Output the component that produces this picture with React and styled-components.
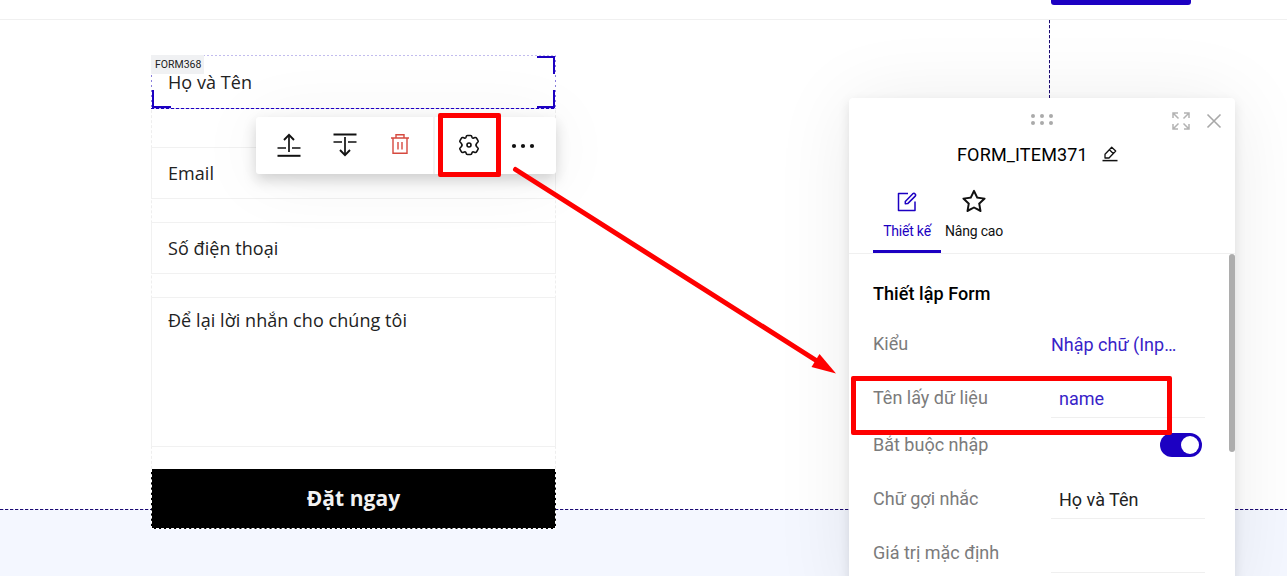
import React from "react";
import styled, { createGlobalStyle, css } from "styled-components";
import { AiOutlineStar } from "react-icons/ai";

const BLUE = "#1c00c2";

const GlobalStyle = createGlobalStyle`
  * { box-sizing: border-box; }
  html, body { margin: 0; height: 576px; overflow: hidden; background: #fff; }
  svg { display: block; flex: none; }
`;

const Page = styled.div`
  position: relative;
  width: 1287px;
  height: 576px;
  overflow: hidden;
  display: flex;
  flex-direction: column;
  background: #f4f7ff;
  font-family: Roboto, sans-serif;
  color: #111;
`;

const Header = styled.header`
  height: 20px;
  flex: none;
  background: #fff;
  border-bottom: 1px solid #f0f0f0;
  padding-left: 1051px;
`;

const HeaderButton = styled.div`
  width: 140px;
  height: 5px;
  background: ${BLUE};
  border-radius: 0 0 3px 3px;
`;

const Section = styled.section`
  height: 490px;
  flex: none;
  display: flex;
  background:
    repeating-linear-gradient(90deg, #1b0b70 0 3px, #b9b3e6 3px 4px, #fff 4px 5px) 0 489px / 100% 1px no-repeat,
    repeating-linear-gradient(180deg, #1b0b70 0 3px, #b9b3e6 3px 4px, #fff 4px 5px) 1049px 0 / 1px 100% no-repeat,
    #fff;
  padding: 35px 0 0 151px;
`;

const Form = styled.div`
  width: 405px;
  height: 474px;
  display: flex;
  flex-direction: column;
  border: 1px dashed #eeeeee;
  border-width: 0 1px;
  font-family: "Open Sans", sans-serif;
  font-size: 18px;
  line-height: 26px;
  font-weight: 370;
  letter-spacing: 0.06px;
  color: #222;
`;

const Field = styled.div`
  flex: none;
  height: ${(p) => p.$h}px;
  margin: 0 -1px ${(p) => p.$gap}px;
  padding: ${(p) => p.$top}px 17px 0 16px;
  border: 1px solid #f1f1f1;
`;

const SelectedField = styled.div`
  position: relative;
  flex: none;
  height: 54px;
  margin: 0 -1px 38px;
  padding: 14px 17px;
  background:
    repeating-linear-gradient(90deg, ${BLUE} 0 3px, #c9c2f2 3px 5px) 0 53px / 100% 1px no-repeat,
    repeating-linear-gradient(90deg, #c2bcee 0 2px, #fff 2px 4px) 0 0 / 100% 1px no-repeat,
    repeating-linear-gradient(180deg, #8b80dc 0 2px, #fff 2px 5px) 0 0 / 1px 100% no-repeat,
    repeating-linear-gradient(180deg, #8b80dc 0 2px, #fff 2px 5px) 404px 0 / 1px 100% no-repeat;
`;

const FormBadge = styled.span`
  position: absolute;
  left: 0;
  top: 0;
  width: 53px;
  height: 19px;
  padding-left: 4px;
  background: #f0f1f3;
  font: 400 10.5px/19px Roboto, sans-serif;
  letter-spacing: 0;
  color: #222;
`;

const Corner = styled.i`
  position: absolute;
  width: 18px;
  height: 18px;
  border: 0 solid ${BLUE};
  ${(p) => p.$side === "bl" && css`left: 1px; bottom: 1px; width: 19px; border-width: 0 0 2px 2px;`}
  ${(p) => p.$side === "br" && css`right: 1px; bottom: 1px; border-width: 0 2px 2px 0;`}
  ${(p) => p.$side === "tr" && css`right: 1px; top: 1px; border-width: 2px 2px 0 0;`}
`;

const Submit = styled.div`
  flex: none;
  height: 60px;
  margin: 0 -1px;
  padding-bottom: 1px;
  display: flex;
  align-items: center;
  justify-content: center;
  background: #000;
  border: 1px dashed #fff;
  border-top: 0;
  font-size: 21px;
  font-weight: 700;
  color: #f2f2f2;
`;

const Toolbar = styled.div`
  position: absolute;
  left: 256px;
  top: 117px;
  width: 300px;
  height: 57px;
  display: flex;
  align-items: center;
  background: #fff;
  border-radius: 3px;
  box-shadow: 0 6px 14px rgba(0, 0, 0, 0.17), 0 4px 70px rgba(0, 0, 0, 0.06);
`;

const Tool = styled.span`
  width: ${(p) => p.$w}px;
  height: 57px;
  padding-bottom: ${(p) => p.$lift || 0}px;
  display: flex;
  align-items: center;
  justify-content: center;
  border-left: ${(p) => (p.$divided ? "2px solid #f3f3f3" : "0")};
`;

const Panel = styled.aside`
  position: absolute;
  left: 849px;
  top: 98px;
  width: 386px;
  height: 500px;
  background: #fff;
  border-radius: 4px 4px 0 0;
  display: flex;
  flex-direction: column;
  box-shadow: 0 4px 12px rgba(0, 0, 0, 0.1), 0 4px 80px rgba(0, 0, 0, 0.08);
`;

const PanelTop = styled.div`
  height: 42px;
  display: flex;
  justify-content: flex-end;
  align-items: center;
  padding: 4px 13px 0 182px;
`;

const Grip = styled.span`
  display: grid;
  grid-template-columns: repeat(3, 4px);
  gap: 3px 5px;
  margin-right: auto;
  margin-top: -4px;
`;

const Dot = styled.i`
  width: 4px;
  height: 4px;
  border-radius: 50%;
  background: #aaa;
`;

const PanelTitle = styled.div`
  height: 28px;
  display: flex;
  align-items: center;
  gap: 14px;
  padding-left: 108px;
  font-size: 18px;
  font-weight: 450;
  letter-spacing: 0.16px;
  color: #000;
`;

const Tabs = styled.div`
  height: 86px;
  display: flex;
  padding-left: 24px;
  border-bottom: 1px solid #f0f0f0;
`;

const Tab = styled.div`
  width: ${(p) => (p.$active ? 68 : 66)}px;
  height: 85px;
  display: flex;
  flex-direction: column;
  align-items: center;
  padding-top: 20px;
  font-size: 14px;
  letter-spacing: -0.2px;
  line-height: 19px;
  white-space: nowrap;
  color: ${(p) => (p.$active ? BLUE : "#111")};
  border-bottom: 3px solid ${(p) => (p.$active ? BLUE : "transparent")};
`;

const TabIcon = styled.span`
  height: 28px;
  display: flex;
  align-items: center;
  margin-bottom: 6px;
`;

const PanelBody = styled.div`
  display: flex;
  flex: 1;
  min-height: 0;
`;

const Settings = styled.div`
  flex: 1;
  padding: 25px 24px 0;
`;

const Heading = styled.div`
  height: 30px;
  line-height: 30px;
  font-size: 18px;
  font-weight: 500;
  letter-spacing: 0.07px;
  margin-bottom: 10px;
  color: #000;
`;

const SettingRow = styled.div`
  height: ${(p) => p.$h}px;
  display: flex;
  font-size: 18px;
  line-height: 50px;
`;

const Label = styled.span`
  width: 178px;
  color: #7b7b7b;
`;

const Value = styled.span`
  width: 154px;
  height: ${(p) => (p.$boxed ? "45px" : "50px")};
  padding: ${(p) => (p.$boxed ? "1px 0 0 8px" : "1px 0 0 0")};
  border-bottom: ${(p) => (p.$boxed ? "1px solid #efefef" : "0")};
  color: ${(p) => (p.$plain ? "#222" : "#3823c8")};
`;

const Toggle = styled.span`
  width: 42px;
  height: 24px;
  margin: 13px 0 0 109px;
  padding: 3px;
  display: flex;
  justify-content: flex-end;
  border-radius: 12px;
  background: ${BLUE};
`;

const Knob = styled.i`
  width: 18px;
  height: 18px;
  border-radius: 50%;
  background: #fff;
`;

const ScrollThumb = styled.div`
  width: 6px;
  height: 198px;
  margin-left: -6px;
  border-radius: 3px;
  background: #adadad;
`;

const Highlight = styled.div`
  position: absolute;
  left: ${(p) => p.$x}px;
  top: ${(p) => p.$y}px;
  width: ${(p) => p.$w}px;
  height: ${(p) => p.$h}px;
  border: 5px solid #fe0000;
  border-radius: 2px;
`;

const Arrow = styled.svg`
  position: absolute;
  left: 500px;
  top: 160px;
`;

const MoveUpIcon = () => (
  <svg width="24" height="26" viewBox="0 0 24 26" fill="none" stroke="#111">
    <path d="M.5 23.8h23" strokeWidth="2" />
    <path d="M.5 16h8.5M15 16h8.500M12 20V3" strokeWidth="1.7" />
    <path d="M7 8l5-5.200L17 8" strokeWidth="1.9" />
  </svg>
);

const MoveDownIcon = () => (
  <svg width="24" height="26" viewBox="0 0 24 26" fill="none" stroke="#111">
    <path d="M.5 2.500h23" strokeWidth="2" />
    <path d="M.5 10H9M15 10h8.500M12 5v18" strokeWidth="1.7" />
    <path d="M7 18l5 5.200 5-5.200" strokeWidth="1.9" />
  </svg>
);

const TrashIcon = () => (
  <svg width="20" height="22" viewBox="0 0 20 22" fill="none" stroke="#d6493f" strokeWidth="1.4">
    <path d="M1 5h18M3 5v15.300h14V5M6 4.500V1.800h8v2.700M8 9v7.500M12 9v7.500" />
  </svg>
);

const GearIcon = () => (
  <svg width="22" height="22" viewBox="0 0 22 22" fill="none" stroke="#111" strokeWidth="1.6" strokeLinejoin="round">
    <path d="M8 3.2Q8.300 1.500 9.500 1.500H12.500Q13.700 1.500 14 3.200Q14.400 4.500 15.700 4L17 3.500Q18.100 3.200 18.700 4.300L20 6.600Q20.600 7.700 19.600 8.500L18.800 9.200Q17.100 11 18.800 12.800L19.600 13.500Q20.600 14.300 20 15.400L18.700 17.700Q18.100 18.800 17 18.500L15.700 18Q14.400 17.500 14 18.800Q13.700 20.500 12.500 20.500H9.500Q8.300 20.500 8 18.800Q7.600 17.500 6.300 18L5 18.500Q3.900 18.800 3.300 17.700L2 15.400Q1.400 14.300 2.400 13.500L3.200 12.800Q4.900 11 3.200 9.200L2.400 8.500Q1.400 7.700 2 6.600L3.300 4.300Q3.900 3.200 5 3.500L6.300 4Q7.600 4.500 8 3.200Z" />
    <circle cx="11" cy="11" r="2" />
  </svg>
);

const MoreIcon = () => (
  <svg width="24" height="6" viewBox="0 0 24 6" fill="#111">
    <circle cx="3" cy="3" r="2.100" />
    <circle cx="12" cy="3" r="2.100" />
    <circle cx="21" cy="3" r="2.100" />
  </svg>
);

const ExpandIcon = () => (
  <svg width="18" height="18" viewBox="0 0 18 18" fill="none" stroke="#b3b3b3" strokeWidth="1.5">
    <path d="M1 6V1h5M1 1l5.500 5.500M12 1h5v5M17 1l-5.500 5.500M1 12v5h5M1 17l5.500-5.500M12 17h5v-5M17 17l-5.500-5.500" />
  </svg>
);

const CloseIcon = () => (
  <svg width="16" height="16" viewBox="0 0 16 16" stroke="#a8a8a8" strokeWidth="1.6">
    <path d="M1.500 1.500l13 13M14.500 1.500l-13 13" />
  </svg>
);

const RenameIcon = () => (
  <svg width="16" height="16" viewBox="0 0 16 16" fill="none" stroke="#111" strokeWidth="1.3" strokeLinejoin="round">
    <path d="M.5 14.600h15" strokeWidth="1.5" />
    <path d="M3 12V8.300L9.700 1.300L13.700 5L7 12ZM7.400 3.800L11.300 7.500" />
  </svg>
);

const DesignIcon = () => (
  <svg width="20" height="20" viewBox="0 0 20 20" fill="none" stroke={BLUE} strokeWidth="1.5" strokeLinejoin="round">
    <path d="M11 1.500H1.500V18.500H18V9.500" />
    <path d="M8.300 11.800V9.500L15.600 1.900Q17 .7 18.100 1.900Q19.200 3.100 18 4.400L10.700 11.600Z" />
  </svg>
);

const IconGap = styled.span`
  width: 16px;
  flex: none;
`;

export default function App() {
  return (
    <Page>
      <GlobalStyle />
      <Header>
        <HeaderButton />
      </Header>
      <Toolbar>
        <Tool $w={66} $lift={2}><MoveUpIcon /></Tool>
        <Tool $w={46} $lift={2}><MoveDownIcon /></Tool>
        <Tool $w={64} $lift={3}><TrashIcon /></Tool>
        <Tool $w={1} />
        <Tool $w={70} $divided $lift={2}><GearIcon /></Tool>
        <Tool $w={40}><MoreIcon /></Tool>
      </Toolbar>
      <Section>
        <Form>
          <SelectedField>
            <FormBadge>FORM368</FormBadge>
            Họ và Tên
            <Corner $side="bl" />
            <Corner $side="tr" />
            <Corner $side="br" />
          </SelectedField>
          <Field $h={52} $gap={23} $top={12}>Email</Field>
          <Field $h={52} $gap={23} $top={12}>Số điện thoại</Field>
          <Field $h={150} $gap={22} $top={9}>Để lại lời nhắn cho chúng tôi</Field>
          <Submit>Đặt ngay</Submit>
        </Form>
      </Section>
      <Panel>
        <PanelTop>
          <Grip>
            <Dot /><Dot /><Dot /><Dot /><Dot /><Dot />
          </Grip>
          <ExpandIcon />
          <IconGap />
          <CloseIcon />
        </PanelTop>
        <PanelTitle>
          FORM_ITEM371
          <RenameIcon />
        </PanelTitle>
        <Tabs>
          <Tab $active>
            <TabIcon><DesignIcon /></TabIcon>
            Thiết kế
          </Tab>
          <Tab>
            <TabIcon><AiOutlineStar size={28} /></TabIcon>
            Nâng cao
          </Tab>
        </Tabs>
        <PanelBody>
          <Settings>
            <Heading>Thiết lập Form</Heading>
            <SettingRow $h={54}>
              <Label>Kiểu</Label>
              <Value>Nhập chữ (Inp…</Value>
            </SettingRow>
            <SettingRow $h={47}>
              <Label>Tên lấy dữ liệu</Label>
              <Value $boxed>name</Value>
            </SettingRow>
            <SettingRow $h={54}>
              <Label>Bắt buộc nhập</Label>
              <Toggle><Knob /></Toggle>
            </SettingRow>
            <SettingRow $h={54}>
              <Label>Chữ gợi nhắc</Label>
              <Value $boxed $plain>Họ và Tên</Value>
            </SettingRow>
            <SettingRow $h={54}>
              <Label>Giá trị mặc định</Label>
              <Value $boxed />
            </SettingRow>
          </Settings>
          <ScrollThumb />
        </PanelBody>
      </Panel>
      <Highlight $x={438} $y={113} $w={63} $h={64} />
      <Highlight $x={851} $y={376} $w={321} $h={59} />
      <Arrow width="350" height="220" viewBox="500 160 350 220">
        <path d="M515.500 169.500L817 361" stroke="#fe0000" strokeWidth="5" strokeLinecap="round" />
        <path d="M836 373.500L819.500 354L811.500 367Z" fill="#fe0000" />
      </Arrow>
    </Page>
  );
}
